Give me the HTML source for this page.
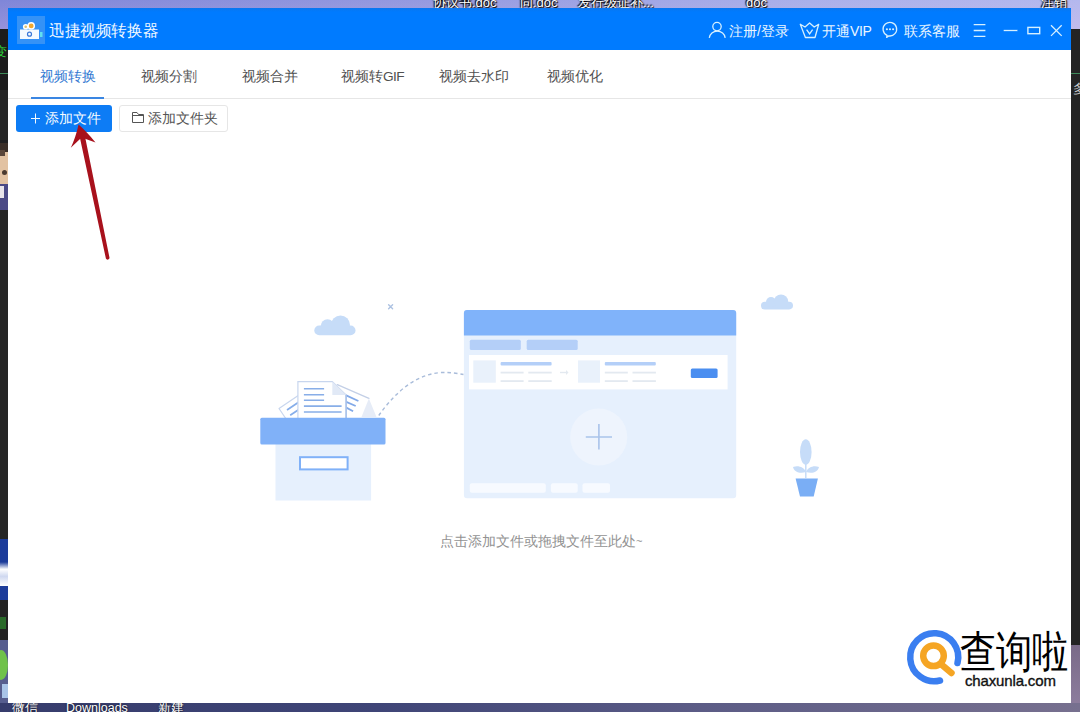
<!DOCTYPE html>
<html><head><meta charset="utf-8">
<style>
*{margin:0;padding:0;box-sizing:border-box}
html,body{width:1080px;height:712px;overflow:hidden}
body{position:relative;background:#1f1f21;font-family:"Liberation Sans",sans-serif}
.a{position:absolute}
.t{position:absolute;white-space:nowrap;line-height:1}
</style></head><body>
<!-- desktop background -->
<div class="a" style="left:0;top:0;width:1080px;height:29px;background:linear-gradient(rgba(255,255,255,0),rgba(255,200,230,0.18)),linear-gradient(90deg,#7f86d8 0%,#959ae0 40%,#aab0ea 75%,#b4b8ee 100%)"></div>
<div class="t" style="left:433px;top:-4px;font-size:13px;color:#fff;text-shadow:1px 1px 1px #000,-1px -1px 1px #000,0 0 2px #000">协议书.doc</div>
<div class="t" style="left:520px;top:-4px;font-size:13px;color:#fff;text-shadow:1px 1px 1px #000,-1px -1px 1px #000,0 0 2px #000">同.doc</div>
<div class="t" style="left:578px;top:-4px;font-size:13px;color:#fff;text-shadow:1px 1px 1px #000,-1px -1px 1px #000,0 0 2px #000">发行级证补...</div>
<div class="t" style="left:746px;top:-4px;font-size:13px;color:#fff;text-shadow:1px 1px 1px #000,-1px -1px 1px #000,0 0 2px #000">doc</div>
<div class="t" style="left:1041px;top:-4px;font-size:13px;color:#fff;text-shadow:1px 1px 1px #000,-1px -1px 1px #000,0 0 2px #000">注销</div>
<div class="a" style="left:0;top:29px;width:9px;height:61px;background:#1c1c1c"></div>
<div class="t" style="left:-6px;top:45px;font-size:13px;color:#2fd43a">变</div>
<div class="a" style="left:0;top:73px;width:9px;height:1px;background:#3e8a5a"></div>
<div class="a" style="left:0;top:90px;width:9px;height:50px;background:#262626"></div>
<div class="a" style="left:0;top:143px;width:9px;height:67px;background:#e2c2a2"></div>
<div class="a" style="left:0;top:143px;width:9px;height:9px;background:#3a2e28"></div>
<div class="a" style="left:0;top:150px;width:5px;height:6px;background:#5a463a"></div>
<div class="a" style="left:2px;top:170px;width:5px;height:5px;border-radius:50%;background:#4a3a30"></div>
<div class="a" style="left:0;top:184px;width:9px;height:26px;background:#4b4a86"></div>
<div class="a" style="left:0;top:186px;width:4px;height:12px;background:#e8e4ea"></div>
<div class="a" style="left:0;top:210px;width:9px;height:329px;background:#262626"></div>
<div class="a" style="left:0;top:539px;width:9px;height:61px;background:#1c3c9a"></div>
<div class="a" style="left:0;top:562px;width:8px;height:24px;background:linear-gradient(#1c3c9a,#fff 30%,#cfd8f0 60%,#fff)"></div>
<div class="a" style="left:0;top:600px;width:9px;height:40px;background:#232323"></div>
<div class="a" style="left:0;top:617px;width:6px;height:12px;background:#2a6a2a"></div>
<div class="a" style="left:0;top:640px;width:9px;height:63px;background:#565d8e"></div>
<div class="a" style="left:-6px;top:650px;width:14px;height:30px;border-radius:50%;background:#6fc24a"></div>
<div class="a" style="left:2px;top:684px;width:6px;height:14px;background:#a9c4e8"></div>
<div class="a" style="left:1071px;top:29px;width:9px;height:616px;background:#242424"></div>
<div class="a" style="left:1071px;top:73px;width:9px;height:1px;background:#3e8a5a"></div>
<div class="t" style="left:1073px;top:82px;font-size:13px;color:#ccc">多</div>
<div class="a" style="left:1071px;top:645px;width:9px;height:67px;background:linear-gradient(#7a6a88,#8f7fa0)"></div>
<div class="a" style="left:0;top:703px;width:1080px;height:9px;background:linear-gradient(90deg,#363c6c 0%,#3f4577 35%,#5c5c86 65%,#77708f 100%)"></div>
<div class="t" style="left:12px;top:702px;font-size:12.5px;color:#fff;text-shadow:0 0 2px #000">微信</div>
<div class="t" style="left:66px;top:702px;font-size:12.5px;color:#fff;text-shadow:0 0 2px #000">Downloads</div>
<div class="t" style="left:158px;top:702px;font-size:12.5px;color:#fff;text-shadow:0 0 2px #000">新建</div>
<!-- app window -->
<div class="a" style="left:8px;top:8px;width:1063px;height:695px;background:#fff"></div>
<!-- title bar -->
<div class="a" style="left:8px;top:8px;width:1063px;height:42px;background:linear-gradient(#0a76ee,#007bff 4px)"></div>
<div class="a" style="left:17px;top:16px;width:28px;height:28px;background:#4d9cf8"></div>
<div class="t" style="left:49px;top:23px;font-size:16px;color:#f2f9ff;transform:scaleX(0.975);transform-origin:0 0">迅捷视频转换器</div>
<div class="t" style="left:729px;top:24px;font-size:14px;color:#eaf6ff">注册/登录</div>
<div class="t" style="left:822px;top:24px;font-size:14px;color:#eaf6ff">开通<span style="letter-spacing:-0.4px">VIP</span></div>
<div class="t" style="left:904px;top:24px;font-size:14px;color:#eaf6ff">联系客服</div>
<!-- tabs -->
<div class="a" style="left:8px;top:98px;width:1063px;height:1px;background:#e6e6e6"></div>
<div class="a" style="left:31px;top:97px;width:73px;height:2px;background:#3a86e2"></div>
<div class="t" style="left:39.5px;top:70px;font-size:13.7px;color:#3379d2">视频转换</div>
<div class="t" style="left:140.5px;top:70px;font-size:13.7px;color:#505050">视频分割</div>
<div class="t" style="left:242px;top:70px;font-size:13.7px;color:#505050">视频合并</div>
<div class="t" style="left:341px;top:70px;font-size:13.7px;color:#505050">视频转<span style="letter-spacing:-0.6px">GIF</span></div>
<div class="t" style="left:438.5px;top:70px;font-size:13.7px;color:#505050">视频去水印</div>
<div class="t" style="left:546.5px;top:70px;font-size:13.7px;color:#505050">视频优化</div>
<!-- buttons -->
<div class="a" style="left:16px;top:105px;width:96px;height:27px;background:#0d7cf5;border-radius:3px"></div>
<div class="t" style="left:45px;top:112px;font-size:13.6px;color:#f4faff">添加文件</div>
<div class="a" style="left:119px;top:105px;width:109px;height:27px;background:#fff;border:1px solid #e6e6e6;border-radius:3px"></div>
<div class="t" style="left:148px;top:112px;font-size:13.6px;color:#555">添加文件夹</div>
<!-- svg overlay -->
<svg class="a" style="left:0;top:0" width="1080" height="712" viewBox="0 0 1080 712">
 <!-- app icon -->
 <rect x="17" y="16" width="28" height="28" fill="#3592f6"/>
 <rect x="20" y="29.5" width="19" height="9.5" fill="#f4faff"/>
 <rect x="40" y="32" width="2.5" height="5" fill="#5fe0f0"/>
 <circle cx="25.7" cy="26.8" r="2.8" fill="#fff"/><circle cx="25.7" cy="26.8" r="1.3" fill="#d8c070"/>
 <circle cx="31.2" cy="25.9" r="3.8" fill="#fff"/><circle cx="31.2" cy="25.9" r="2.4" fill="#f0a830"/>
 <circle cx="29.5" cy="34.2" r="2" fill="none" stroke="#3a78d8" stroke-width="1.2"/>
 <!-- user icon -->
 <g fill="none" stroke="#d6f0ff" stroke-width="1.3">
  <circle cx="717" cy="26.6" r="4.2"/>
  <path d="M709.3 37.8 A8 7.5 0 0 1 725.2 37.8"/>
  <!-- crown -->
  <path d="M805.4 37.5 L815 37.5 L818.7 24.3 L814.2 27 L809.6 22.9 L805 27 L800.3 24.3 Z" stroke-linejoin="round"/>
  <path d="M806.6 29.6 L809.6 33.8 L812.6 29.6"/>
  <!-- chat -->
  <path d="M887.1 35.4 L886.6 37.4 L888.8 35.9 A6.8 6.8 0 1 0 887.1 35.4 Z" stroke-linejoin="round"/>
  <!-- menu -->
  <path d="M973.7 24.7 H985.4 M973.7 30.5 H985.4 M973.7 36.4 H985.4"/>
  <!-- min -->
  <path d="M1003.7 30.5 H1017.4"/>
  <!-- max -->
  <rect x="1027.9" y="27.4" width="11.8" height="6.3" stroke-width="1.4"/>
  <!-- close -->
  <path d="M1051 25.2 L1061.7 35.9 M1061.7 25.2 L1051 35.9"/>
 </g>
 <g fill="#d6f0ff"><circle cx="886.9" cy="29.2" r="1.05"/><circle cx="890" cy="29.2" r="1.05"/><circle cx="893.1" cy="29.2" r="1.05"/></g>
 <!-- button plus -->
 <path d="M31 118.5 H40 M35.5 113.5 V123.5" stroke="#f4faff" stroke-width="1"/>
 <!-- folder -->
 <path d="M132.5 112.5 H137 L138.5 114.5 H143.5 V122.5 H132.5 Z M132.5 115.5 H143.5" fill="none" stroke="#555" stroke-width="1"/>
</svg>
<!-- illustration -->
<svg class="a" style="left:0;top:0" width="1080" height="712" viewBox="0 0 1080 712">
 <!-- clouds -->
 <g fill="#c6dcf8">
  <rect x="314.3" y="325.5" width="41.2" height="9.8" rx="4.9"/>
  <circle cx="327.5" cy="326" r="6.8"/><circle cx="340.5" cy="325" r="9.5"/>
  <rect x="761" y="301.8" width="32" height="7.6" rx="3.8"/>
  <circle cx="771" cy="302" r="5"/><circle cx="781" cy="301.6" r="7.2"/>
 </g>
 <!-- star -->
 <path d="M388.6 304.8 L392.6 308.8 M392.6 304.8 L388.6 308.8" stroke="#adc2e2" stroke-width="1.4" stroke-linecap="round"/>
 <!-- dashed curve -->
 <path d="M378.8 415.5 C392 397 412 375 440 372.6 C450 372 457 373.5 463.5 374.5" fill="none" stroke="#a9bcda" stroke-width="1.4" stroke-dasharray="3.5 3"/>
 <!-- papers -->
 <path d="M279 408.5 L313.8 385 L337.3 419.8 L302.5 443.3 Z" fill="#fff" stroke="#c8d6ee" stroke-width="1.2" stroke-linejoin="round"/>
 <path d="M287 410 L300 401.2 M290.2 415.3 L300 408.7" stroke="#86aeea" stroke-width="1.7"/>
 <path d="M337.3 384.6 L368.9 398.4 L376.5 417.8 L330 417.8 Z" fill="#fff"/>
 <path d="M337.3 384.6 L368.9 398.4" stroke="#c3cfe6" stroke-width="1.3" stroke-linecap="round"/>
 <path d="M368.9 398.4 L376.5 417 L361.5 417 Z" fill="#e6ecf7"/>
 <path d="M344 394.4 L358.4 401 M344 400.9 L355.7 406 M344 406.4 L353.1 411.3" stroke="#82a9e8" stroke-width="1.8"/>
 <path d="M297.9 418 V381.6 H332.3 L346.1 395 V418" fill="#fff" stroke="#c8d6ee" stroke-width="1.2"/>
 <path d="M346.1 395 V418" stroke="#9fbbe8" stroke-width="1.3"/>
 <path d="M332.3 381.6 V395 H346.1 Z" fill="#e1e9f6"/>
 <path d="M303.9 388.8 H324.1 M303.9 394.7 H324.1 M303.9 400.3 H324.1 M303.9 406.1 H341.6 M303.9 412 H341.6" stroke="#88aee8" stroke-width="1.6"/>
 <!-- box -->
 <rect x="275.5" y="444" width="95.6" height="56.5" fill="#e6f0fd"/>
 <rect x="260.3" y="417.8" width="125.2" height="26.6" rx="1.5" fill="#80b1f8"/>
 <rect x="300" y="457.2" width="47.6" height="12.2" fill="#fff" stroke="#80b1f8" stroke-width="2"/>
 <!-- window -->
 <path d="M463.9 498.2 V313 A3 3 0 0 1 466.9 310 H733.2 A3 3 0 0 1 736.2 313 V495.2 A3 3 0 0 1 733.2 498.2 H466.9 A3 3 0 0 1 463.9 495.2 Z" fill="#e6f0fd"/>
 <path d="M463.9 335.4 V313 A3 3 0 0 1 466.9 310 H733.2 A3 3 0 0 1 736.2 313 V335.4 Z" fill="#80b3fa"/>
 <rect x="469.8" y="339.7" width="51" height="10.3" rx="1.5" fill="#b4cff8"/>
 <rect x="526.7" y="339.7" width="51" height="10.3" rx="1.5" fill="#b4cff8"/>
 <rect x="469" y="355" width="258.6" height="34.4" fill="#fff"/>
 <rect x="473.3" y="360.4" width="22.5" height="22.3" fill="#e9f1fb"/>
 <rect x="578" y="360.4" width="22" height="22.3" fill="#e9f1fb"/>
 <rect x="500.6" y="362" width="51" height="3.4" rx="1" fill="#b4cff8"/>
 <rect x="604.8" y="362" width="51" height="3.4" rx="1" fill="#b4cff8"/>
 <g fill="#e3e9f0">
  <rect x="500.6" y="371.7" width="23" height="1.8"/><rect x="528.3" y="371.7" width="23.4" height="1.8"/>
  <rect x="500.6" y="380.2" width="23" height="1.8"/><rect x="528.3" y="380.2" width="23.4" height="1.8"/>
  <rect x="604.8" y="371.7" width="23" height="1.8"/><rect x="632.5" y="371.7" width="23.4" height="1.8"/>
  <rect x="604.8" y="380.2" width="23" height="1.8"/><rect x="632.5" y="380.2" width="23.4" height="1.8"/>
  <rect x="560" y="371.8" width="7" height="1.4"/><path d="M566 370 L568.5 372.5 L566 375 Z"/>
 </g>
 <rect x="690.8" y="368.5" width="26.8" height="9.5" rx="1.5" fill="#4a8ef0"/>
 <circle cx="598.7" cy="437" r="28.5" fill="#eef4fd"/>
 <path d="M585.8 437 H612 M598.9 424 V449.6" stroke="#a9c3ea" stroke-width="1.6"/>
 <g fill="#f7faff">
  <rect x="469.8" y="483.2" width="76" height="9.6" rx="2"/>
  <rect x="550.9" y="483.2" width="26.8" height="9.6" rx="2"/>
  <rect x="582.5" y="483.2" width="27.5" height="9.6" rx="2"/>
 </g>
 <!-- plant -->
 <path d="M805.8 478 V462" stroke="#c6dcf8" stroke-width="1.5"/>
 <path d="M806 472 C800 474 794 472 793 467 C798 465 804 467 806 472 Z" fill="#c6dcf8"/>
 <path d="M806 472 C812 474 818 472 819 467 C814 465 808 467 806 472 Z" fill="#c6dcf8"/>
 <ellipse cx="805.8" cy="452" rx="5.8" ry="12.8" fill="#c6dcf8"/>
 <path d="M795.6 478.4 H817.9 L813.7 496.5 H800 Z" fill="#7aaef5"/>
 <!-- arrow -->
 <path d="M79.2 134.5 L84.4 133.4 L109.5 257.8 A1.9 1.9 0 0 1 105.9 258.6 Z" fill="#a8111c"/>
 <path d="M78.6 124.5 Q75.5 138 70.8 147.7 L81.6 137.5 L95.5 142.4 Q86.5 131.5 78.6 124.5 Z" fill="#a8111c"/>
 <!-- watermark logo -->
 <path d="M957.5 663 A24 24 0 1 0 940 680.5" fill="none" stroke="#3a7ef0" stroke-width="6.5" stroke-linecap="round"/>
 <circle cx="933.5" cy="655.8" r="10.3" fill="none" stroke="#f5a524" stroke-width="6.5"/>
 <path d="M942 665 L951.5 673" stroke="#f5a524" stroke-width="6.5" stroke-linecap="round"/>
</svg>
<div class="t" style="left:960px;top:631.3px;font-size:36px;color:#000;font-family:'Liberation Serif',serif;transform:scaleY(1.21);transform-origin:0 0">查询啦</div>
<div class="t" style="left:965px;top:673px;font-size:15px;color:#111;-webkit-text-stroke:0.35px #111;letter-spacing:-0.15px">chaxunla.com</div>
<!-- hint -->
<div class="t" style="left:440px;top:535px;font-size:13.5px;color:#929292">点击添加文件或拖拽文件至此处<span style="font-size:11px;position:relative;top:-1px">~</span></div>
</body></html>
